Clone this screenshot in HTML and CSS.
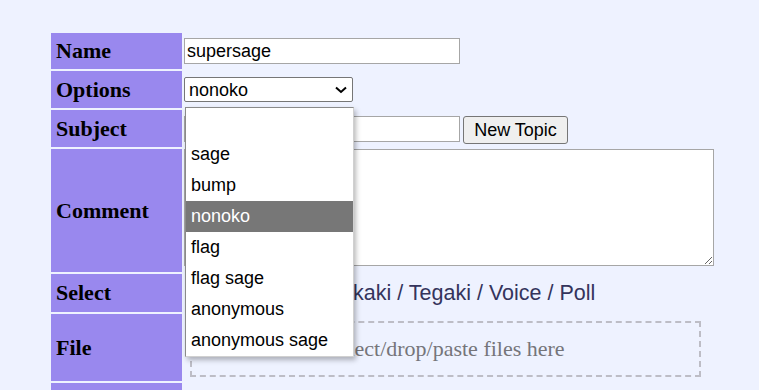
FILE: index.html
```html
<!DOCTYPE html>
<html>
<head>
<meta charset="utf-8">
<link rel="stylesheet" href="styles.css">
</head>
<body>
<form class="post-form">
  <div class="label">Name</div>
  <div class="field"><input class="text-input name-input" type="text" value="supersage"></div>

  <div class="label">Options</div>
  <div class="field options-field">
    <select class="options-select">
      <option></option>
      <option>sage</option>
      <option selected>nonoko</option>
    </select>
    <svg class="chevron" width="12" height="8" viewBox="0 0 12 8"><path d="M1 1.5 L6 6 L11 1.5" fill="none" stroke="#000" stroke-width="2"/></svg>
    <div class="dropdown">
      <div class="dropdown-item"></div>
      <div class="dropdown-item">sage</div>
      <div class="dropdown-item">bump</div>
      <div class="dropdown-item active">nonoko</div>
      <div class="dropdown-item">flag</div>
      <div class="dropdown-item">flag sage</div>
      <div class="dropdown-item">anonymous</div>
      <div class="dropdown-item">anonymous sage</div>
    </div>
  </div>

  <div class="label">Subject</div>
  <div class="field subject-field">
    <input class="text-input subject-input" type="text">
    <button class="submit-btn" type="button">New Topic</button>
  </div>

  <div class="label">Comment</div>
  <div class="field comment-field"><textarea class="comment"></textarea></div>

  <div class="label">Select</div>
  <div class="field select-field">
    <span class="modes">Files / Draw / Oekaki / Tegaki / Voice / Poll</span>
  </div>

  <div class="label">File</div>
  <div class="field file-field">
    <div class="dropzone">Select/drop/paste files here</div>
  </div>

  <div class="label"></div>
  <div class="field"></div>
</form>
</body>
</html>
```

FILE: styles.css
```css
html, body {
  margin: 0;
  padding: 0;
  background: #eef2ff;
  overflow: hidden;
}

.post-form {
  display: grid;
  grid-template-columns: 131px 532px;
  grid-template-rows: 36px 37px 37px 123px 38px 67px 40px;
  column-gap: 2px;
  row-gap: 2px;
  padding: 33px 0 0 51px;
}

.label {
  background: #9988ee;
  color: #000;
  font-family: "Liberation Serif", "Times New Roman", serif;
  font-weight: bold;
  font-size: 22px;
  display: flex;
  align-items: center;
  padding-left: 5px;
}

.field {
  display: flex;
  align-items: center;
  font-family: "Liberation Sans", Arial, sans-serif;
}

.text-input {
  box-sizing: border-box;
  height: 26px;
  border: 1px solid #a6a6a6;
  background: #fff;
  font-family: "Liberation Sans", Arial, sans-serif;
  font-size: 18px;
  padding: 0 2px;
  margin: 0;
  color: #000;
}

.name-input {
  width: 276px;
}

.options-field {
  position: relative;
}

.options-select {
  box-sizing: border-box;
  width: 169px;
  height: 25px;
  font-family: "Liberation Sans", Arial, sans-serif;
  font-size: 18px;
  border: 1px solid #767676;
  border-radius: 2px;
  background: #fff;
  color: #000;
  margin: 0;
  padding: 0 2px 0 4px;
  -webkit-appearance: none;
  appearance: none;
}

.chevron {
  position: absolute;
  left: 151px;
  top: 15px;
  pointer-events: none;
}

.dropdown {
  position: absolute;
  left: 1px;
  top: 36px;
  width: 169px;
  box-sizing: border-box;
  background: #fff;
  border: 1px solid #8a8a8a;
  border-right-color: #d0d0d0;
  border-bottom-color: #d0d0d0;
  box-shadow: 2px 3px 5px rgba(0, 0, 0, 0.28);
  z-index: 10;
}

.dropdown-item {
  height: 31px;
  line-height: 31px;
  padding-left: 5px;
  font-family: "Liberation Sans", Arial, sans-serif;
  font-size: 18px;
  color: #000;
  white-space: nowrap;
}

.dropdown-item.active {
  background: #777777;
  color: #fff;
}

.subject-field {
  gap: 3px;
}

.subject-input {
  width: 276px;
}

.submit-btn {
  box-sizing: border-box;
  width: 105px;
  height: 28px;
  margin-top: 3px;
  font-family: "Liberation Sans", Arial, sans-serif;
  font-size: 18px;
  color: #000;
  background: #efefef;
  border: 1px solid #767676;
  border-radius: 3px;
  padding: 0;
}

.comment-field {
  align-items: flex-start;
}

.comment {
  box-sizing: border-box;
  width: 530px;
  height: 117px;
  border: 1px solid #a6a6a6;
  background: #fff;
  margin: 0;
  resize: both;
}

.modes {
  font-size: 21.5px;
  color: #34345c;
  padding-left: 9px;
  white-space: nowrap;
}

.file-field {
  align-items: flex-start;
}

.dropzone {
  box-sizing: border-box;
  margin: 7px 0 0 6px;
  width: 511px;
  height: 56px;
  border: 2px dashed #bdbdc6;
  display: flex;
  align-items: center;
  justify-content: center;
  font-family: "Liberation Serif", "Times New Roman", serif;
  font-size: 22px;
  color: #75757a;
}
```
